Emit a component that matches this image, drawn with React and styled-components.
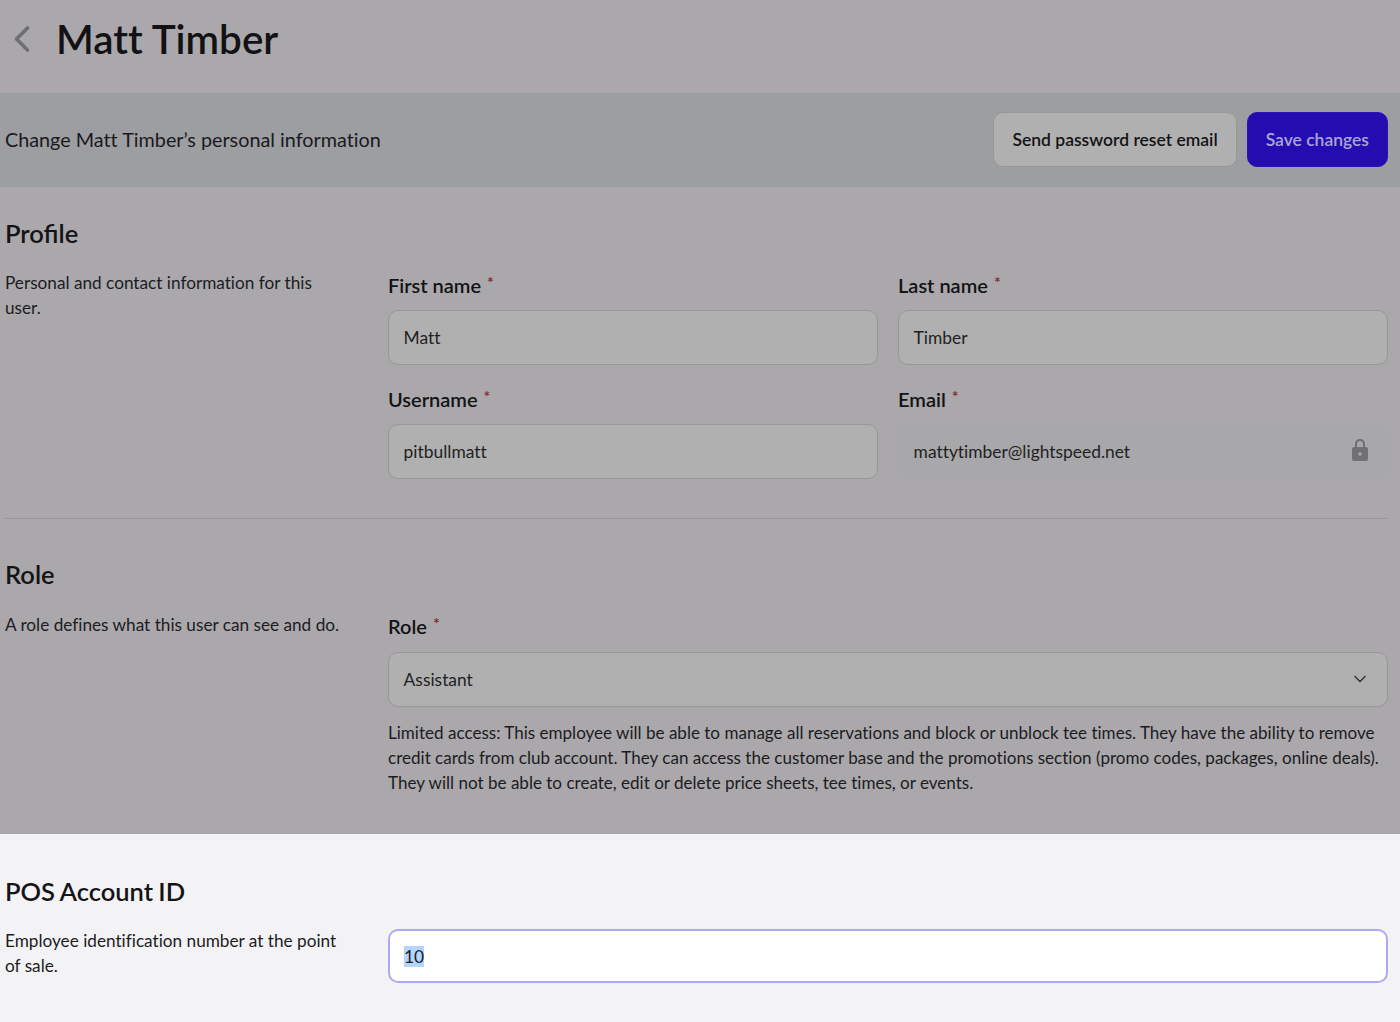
import styled, { createGlobalStyle } from "styled-components";
import { ChevronDown, ChevronLeft } from "lucide-react";

const GlobalStyle = createGlobalStyle`
  html, body {
    margin: 0;
    padding: 0;
    background: #f3f2f5;
    font-family: Lato, "Open Sans", sans-serif;
    font-variant-ligatures: none;
    color: #17171a;
  }
`;

const Page = styled.div`
  width: 1400px;
  height: 1022px;
  overflow: hidden;
  background: #f3f2f5;
`;

const Dimmed = styled.div`
  height: 834px;
  background: #aaa8ab;
  box-sizing: border-box;
`;

const Header = styled.header`
  height: 93px;
  display: flex;
  align-items: center;
  gap: 12px;
  padding: 0 0 16px 0;
  box-sizing: border-box;
  color: #6f6f72;
`;

const Title = styled.h1`
  margin: 0;
  font-size: 40.4px;
  line-height: 48px;
  font-weight: 600;
  color: #121214;
`;

const Band = styled.div`
  height: 94px;
  box-sizing: border-box;
  background: #9c9ea1;
  display: flex;
  align-items: center;
  justify-content: space-between;
  padding: 0 12px 2px 5px;
`;

const BandText = styled.div`
  font-size: 19.8px;
  color: #1a1a1d;
`;

const Actions = styled.div`
  display: flex;
  gap: 10px;
`;

const Button = styled.button`
  height: 55px;
  padding: 0 18px;
  border-radius: 10px;
  font-family: inherit;
  font-size: 17.5px;
  font-weight: 600;
  color: ${(props) => (props.$primary ? "#a9a5d6" : "#141416")};
  background: ${(props) => (props.$primary ? "#230db0" : "#b0b0b0")};
  border: 1px solid ${(props) => (props.$primary ? "#2a14b8" : "#979797")};
`;

const Section = styled.section`
  display: grid;
  grid-template-columns: 383px 1000px;
  padding: ${(props) => props.$padding || "0"};
  margin: 0 12px 0 5px;
  border-bottom: ${(props) => (props.$divider ? "1px solid #979698" : "none")};
`;

const Heading = styled.h2`
  grid-column: 1 / -1;
  margin: 0;
  font-size: 25.5px;
  line-height: 32px;
  font-weight: 600;
  word-spacing: -1px;
  font-variant-ligatures: common-ligatures;
  color: #141416;
`;

const Aside = styled.p`
  margin: ${(props) => props.$top || "0"};
  width: 340px;
  font-size: 17.2px;
  line-height: 25px;
  color: #1c1c1f;
`;

const Fields = styled.div`
  display: grid;
  grid-template-columns: 490px 490px;
  column-gap: 20px;
  row-gap: 21px;
  margin: ${(props) => props.$top || "0"};
`;

const Field = styled.div`
  grid-column: ${(props) => (props.$wide ? "1 / -1" : "auto")};
`;

const Label = styled.div`
  font-size: 20px;
  line-height: 26px;
  font-weight: 600;
  color: #131315;
  margin-bottom: ${(props) => props.$gap || "12px"};
`;

const Star = styled.span`
  color: #7a2327;
  font-size: 16px;
  line-height: 0;
  margin-left: 6px;
  vertical-align: 5px;
`;

const Control = styled.div`
  height: 55px;
  box-sizing: border-box;
  display: flex;
  align-items: center;
  justify-content: space-between;
  padding: 0 17px 1px 14.6px;
  font-size: 17.4px;
  color: #1f1f22;
  border-radius: 10px;
  border: 1px solid ${(props) => (props.$locked ? "#a8a7aa" : "#979798")};
  background: ${(props) => (props.$locked ? "#a8a7aa" : "#b0b0b0")};
`;

const Hint = styled.p`
  margin: 13px 0 0;
  font-size: 17.06px;
  line-height: 25px;
  color: #1c1c1f;
  white-space: nowrap;
`;

const ActiveControl = styled.div`
  height: 54px;
  box-sizing: border-box;
  display: flex;
  align-items: center;
  padding: 0 14px;
  background: #fff;
  border: 2px solid #aaaaf5;
  border-radius: 10px;
  font-size: 17.4px;
  color: #1f1f22;
  margin-top: 22px;
`;

const Selected = styled.span`
  background: #b4d5fe;
  line-height: 21px;
`;

const LockSvg = styled.svg`
  margin: 0 2px 2px 0;
`;

const LockIcon = () => (
  <LockSvg width="16" height="22" viewBox="0 0 16 22" fill="#717173">
    <path d="M8 0C4.6 0 3 2.4 3 5v3H2a2 2 0 0 0-2 2v10a2 2 0 0 0 2 2h12a2 2 0 0 0 2-2V10a2 2 0 0 0-2-2h-1V5c0-2.6-1.6-5-5-5Zm-3 8V5c0-1.7 1-3 3-3s3 1.3 3 3v3H5Z" />
    <circle cx="8" cy="15" r="1.8" fill="#a8a7aa" />
  </LockSvg>
);

const App = () => {
  return (
    <Page>
      <GlobalStyle />
      <Dimmed>
        <Header>
          <ChevronLeft size={44} strokeWidth={2} />
          <Title>Matt Timber</Title>
        </Header>
        <Band>
          <BandText>Change Matt Timber’s personal information</BandText>
          <Actions>
            <Button>Send password reset email</Button>
            <Button $primary>Save changes</Button>
          </Actions>
        </Band>

        <Section $divider $padding="30px 0 39px">
          <Heading>Profile</Heading>
          <Aside $top="21px 0 0">Personal and contact information for this user.</Aside>
          <Fields $top="23px 0 0">
            <Field>
              <Label>First name<Star>*</Star></Label>
              <Control>Matt</Control>
            </Field>
            <Field>
              <Label>Last name<Star>*</Star></Label>
              <Control>Timber</Control>
            </Field>
            <Field>
              <Label>Username<Star>*</Star></Label>
              <Control>pitbullmatt</Control>
            </Field>
            <Field>
              <Label>Email<Star>*</Star></Label>
              <Control $locked>
                mattytimber@lightspeed.net
                <LockIcon />
              </Control>
            </Field>
          </Fields>
        </Section>

        <Section $padding="39px 0 0">
          <Heading>Role</Heading>
          <Aside $top="22px 0 0">A role defines what this user can see and do.</Aside>
          <Fields $top="23px 0 0">
            <Field $wide>
              <Label $gap="13px">Role<Star>*</Star></Label>
              <Control>
                Assistant
                <ChevronDown size={20} color="#3a3a3d" />
              </Control>
              <Hint>
                Limited access: This employee will be able to manage all reservations and block or unblock tee times. They have the ability to remove
                <br />
                credit cards from club account. They can access the customer base and the promotions section (promo codes, packages, online deals).
                <br />
                They will not be able to create, edit or delete price sheets, tee times, or events.
              </Hint>
            </Field>
          </Fields>
        </Section>
      </Dimmed>

      <Section $padding="41px 0 0">
        <Heading>POS Account ID</Heading>
        <Aside $top="21px 0 0">Employee identification number at the point of sale.</Aside>
        <ActiveControl>
          <Selected>10</Selected>
        </ActiveControl>
      </Section>
    </Page>
  );
};

export default App;
